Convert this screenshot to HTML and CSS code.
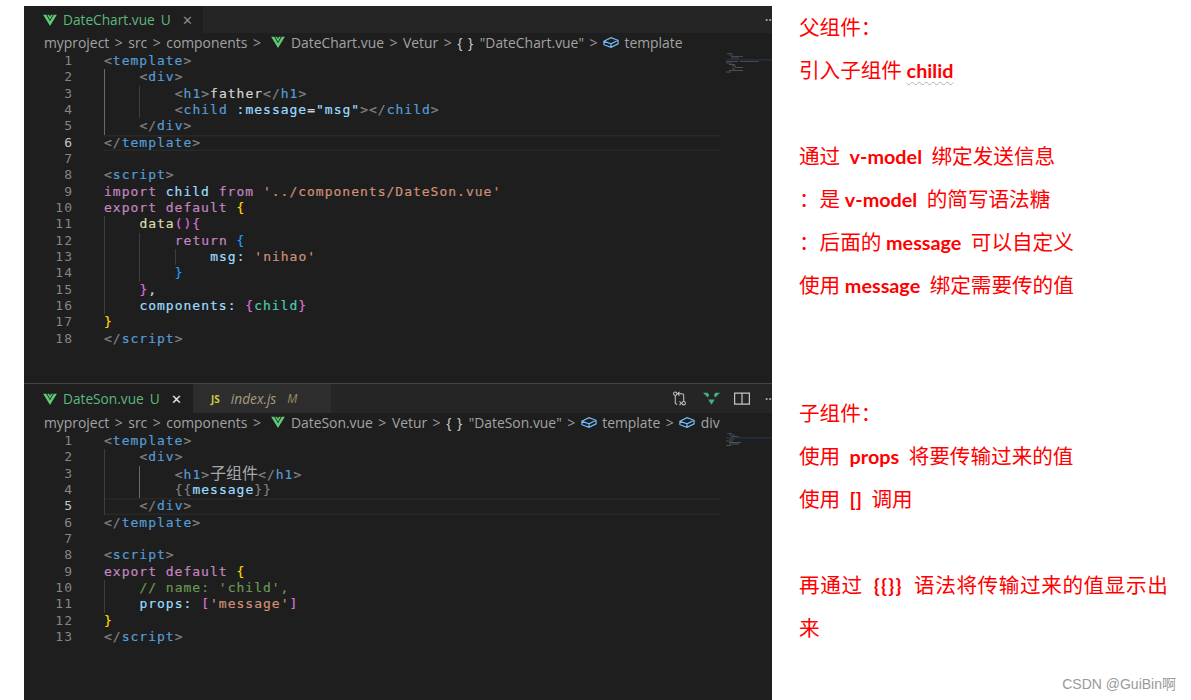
FILE: index.html
```html
<!DOCTYPE html>
<html lang="zh-CN">
<head>
<meta charset="utf-8">
<title>Vue props</title>
<link rel="stylesheet" href="styles.css">
</head>
<body>
<svg class="defs" width="0" height="0" aria-hidden="true">
  <symbol id="vue" viewBox="0 0 16 14"><path fill="#5fcb72" d="M0 1h3.600L8 8.600 12.400 1H16L8 14z"/><path fill="#5fcb72" d="M4.800 1h2l1.200 2.200L9.200 1h2L8 6.600z"/></symbol>
  <symbol id="cube" viewBox="0 0 18 14"><path fill="none" stroke="#75beff" stroke-width="1.300" d="M1 5.500 9 1.500l8 3v4l-8 4-8-3zM1 5.500l8 3 8-4M9 8.500v4"/></symbol>
</svg>
<main class="page">
  <section class="editor">
    <div class="pane pane-top">
      <div class="tabs">
        <div class="tab tab-active tab-one"><svg class="vue"><use href="#vue"/></svg><span class="tab-name">DateChart.vue</span><span class="tab-u">U</span><span class="tab-x dim">✕</span></div>
        <div class="tab-rest"><span class="dots">··</span></div>
      </div>
      <div class="crumbs">
        <span>myproject</span><i>&gt;</i><span>src</span><i>&gt;</i><span>components</span><i class="wide">&gt;</i><svg class="vue"><use href="#vue"/></svg><span>DateChart.vue</span><i>&gt;</i><span>Vetur</span><i>&gt;</i><b>{ }</b><span>"DateChart.vue"</span><i>&gt;</i><svg class="cube"><use href="#cube"/></svg><span>template</span>
      </div>
      <div class="body">
        <div class="lines">
          <div class="row"><span class="ln">1</span><code><u>&lt;</u><s>template</s><u>&gt;</u></code></div>
          <div class="row"><span class="ln">2</span><code><em class="ga"></em><u>&lt;</u><s>div</s><u>&gt;</u></code></div>
          <div class="row"><span class="ln">3</span><code><em class="ga"></em><em class="g"></em><u>&lt;</u><s>h1</s><u>&gt;</u><span class="tx">father</span><u>&lt;/</u><s>h1</s><u>&gt;</u></code></div>
          <div class="row"><span class="ln">4</span><code><em class="ga"></em><em class="g"></em><u>&lt;</u><s>child</s> <span class="at">:message</span><span class="tx">=</span><span class="at">"msg"</span><u>&gt;&lt;/</u><s>child</s><u>&gt;</u></code></div>
          <div class="row"><span class="ln">5</span><code><em class="ga"></em><u>&lt;/</u><s>div</s><u>&gt;</u></code></div>
          <div class="row row-cur"><span class="ln">6</span><code><u>&lt;/</u><s>template</s><u>&gt;</u></code></div>
          <div class="row"><span class="ln">7</span><code></code></div>
          <div class="row"><span class="ln">8</span><code><u>&lt;</u><s>script</s><u>&gt;</u></code></div>
          <div class="row"><span class="ln">9</span><code><span class="kw">import</span> <span class="at">child</span> <span class="kw">from</span> <span class="st">'../components/DateSon.vue'</span></code></div>
          <div class="row"><span class="ln">10</span><code><span class="kw">export default</span> <span class="yl">{</span></code></div>
          <div class="row"><span class="ln">11</span><code><em class="g"></em><span class="fn">data</span><span class="pk">(){</span></code></div>
          <div class="row"><span class="ln">12</span><code><em class="g"></em><em class="g"></em><span class="kw">return</span> <span class="bl">{</span></code></div>
          <div class="row"><span class="ln">13</span><code><em class="g"></em><em class="g"></em><em class="g"></em><span class="at">msg:</span> <span class="st">'nihao'</span></code></div>
          <div class="row"><span class="ln">14</span><code><em class="g"></em><em class="g"></em><span class="bl">}</span></code></div>
          <div class="row"><span class="ln">15</span><code><em class="g"></em><span class="pk">}</span><span class="tx">,</span></code></div>
          <div class="row"><span class="ln">16</span><code><em class="g"></em><span class="at">components:</span> <span class="pk">{</span><span class="te">child</span><span class="pk">}</span></code></div>
          <div class="row"><span class="ln">17</span><code><span class="yl">}</span></code></div>
          <div class="row"><span class="ln">18</span><code><u>&lt;/</u><s>script</s><u>&gt;</u></code></div>
        </div>
        <svg class="minimap" viewBox="0 0 46 22" aria-hidden="true">
          <rect x="0" y="6.500" width="46" height=".8" fill="#1f4263"/>
          <path stroke="#55677a" stroke-width=".6" d="M1 .500h5M3 2h4M5 3.500h12M5 5h8"/>
          <path stroke="#75607a" stroke-width=".6" d="M0 8.500h12M0 10h6"/>
          <path stroke="#7d5f50" stroke-width=".6" d="M14 8.500h19"/>
          <path stroke="#66757a" stroke-width=".6" d="M3 11.500h6M6 13h4M9 14.500h8M6 16h3M3 17.500h14M0 19h5"/>
        </svg>
      </div>
    </div>
    <div class="pane pane-bottom">
      <div class="tabs tabs-b">
        <div class="tab tab-active tab-two"><svg class="vue"><use href="#vue"/></svg><span class="tab-name">DateSon.vue</span><span class="tab-u">U</span><span class="tab-x">✕</span></div>
        <div class="tab tab-idle"><span class="js">JS</span><span class="idx">index.js</span><span class="mod">M</span></div>
        <div class="tab-rest actions">
          <svg class="act" viewBox="0 0 16 16" aria-hidden="true"><g fill="none" stroke="#c5c5c5" stroke-width="1.100"><circle cx="3.500" cy="2.800" r="1.800"/><circle cx="12.500" cy="13" r="1.800"/><path d="M3.500 4.600V13l2 1.500M6 3h4.500q2 0 2 2v6M8 1l-2 2 2 2M8 11l2 2-2 2"/></g></svg>
          <svg class="act" viewBox="0 0 18 14" aria-hidden="true"><path fill="#3fb27f" d="M0 1h5l1.500 2.500L5 6zM18 1h-5l-1.500 2.500L13 6zM5.500 8h7L9 13.500z"/></svg>
          <svg class="act act-split" viewBox="0 0 16 14" aria-hidden="true"><path fill="none" stroke="#c5c5c5" stroke-width="1.200" d="M.6 1.600h14.800v11H.6zM8 1.600v11"/></svg>
          <span class="dots">··</span>
        </div>
      </div>
      <div class="crumbs">
        <span>myproject</span><i>&gt;</i><span>src</span><i>&gt;</i><span>components</span><i class="wide">&gt;</i><svg class="vue"><use href="#vue"/></svg><span>DateSon.vue</span><i>&gt;</i><span>Vetur</span><i>&gt;</i><b>{ }</b><span>"DateSon.vue"</span><i>&gt;</i><svg class="cube"><use href="#cube"/></svg><span>template</span><i>&gt;</i><svg class="cube"><use href="#cube"/></svg><span>div</span>
      </div>
      <div class="body">
        <div class="lines">
          <div class="row"><span class="ln">1</span><code><u>&lt;</u><s>template</s><u>&gt;</u></code></div>
          <div class="row"><span class="ln">2</span><code><em class="g"></em><u>&lt;</u><s>div</s><u>&gt;</u></code></div>
          <div class="row"><span class="ln">3</span><code><em class="g"></em><em class="ga"></em><u>&lt;</u><s>h1</s><u>&gt;</u><span class="tx cjk">子组件</span><u>&lt;/</u><s>h1</s><u>&gt;</u></code></div>
          <div class="row"><span class="ln">4</span><code><em class="g"></em><em class="ga"></em><u>{{</u><span class="at">message</span><u>}}</u></code></div>
          <div class="row row-cur"><span class="ln">5</span><code><em class="g"></em><u>&lt;/</u><s>div</s><u>&gt;</u></code></div>
          <div class="row"><span class="ln">6</span><code><u>&lt;/</u><s>template</s><u>&gt;</u></code></div>
          <div class="row"><span class="ln">7</span><code></code></div>
          <div class="row"><span class="ln">8</span><code><u>&lt;</u><s>script</s><u>&gt;</u></code></div>
          <div class="row"><span class="ln">9</span><code><span class="kw">export default</span> <span class="yl">{</span></code></div>
          <div class="row"><span class="ln">10</span><code><em class="g"></em><span class="cm">// name: 'child',</span></code></div>
          <div class="row"><span class="ln">11</span><code><em class="g"></em><span class="at">props:</span> <span class="pk">[</span><span class="st">'message'</span><span class="pk">]</span></code></div>
          <div class="row"><span class="ln">12</span><code><span class="yl">}</span></code></div>
          <div class="row"><span class="ln">13</span><code><u>&lt;/</u><s>script</s><u>&gt;</u></code></div>
        </div>
        <svg class="minimap" viewBox="0 0 46 22" aria-hidden="true">
          <rect x="0" y="4.500" width="46" height=".8" fill="#1f4263"/>
          <path stroke="#55677a" stroke-width=".6" d="M1 .500h5M3 2h6M5 3.500h8M3 6h5"/>
          <path stroke="#75607a" stroke-width=".6" d="M0 8h7"/>
          <path stroke="#66757a" stroke-width=".6" d="M3 9.500h12M3 11h10M0 12.500h5"/>
        </svg>
      </div>
    </div>
  </section>
  <section class="notes">
    <p>父组件：</p>
    <p>引入子组件 <span class="lat squiggle">chilid</span></p>
    <p class="gap1">通过 <span class="lat">&nbsp;v-model&nbsp;</span> 绑定发送信息</p>
    <p>：是 <span class="lat">v-model&nbsp;</span> 的简写语法糖</p>
    <p>：后面的 <span class="lat">message&nbsp;</span> 可以自定义</p>
    <p>使用 <span class="lat">message&nbsp;</span> 绑定需要传的值</p>
    <p class="gap2">子组件：</p>
    <p>使用 <span class="lat">&nbsp;props&nbsp;</span> 将要传输过来的值</p>
    <p>使用 <span class="lat">&nbsp;[]&nbsp;</span> 调用</p>
    <p class="gap1 spread">再通过 <span class="lat curly">&nbsp;{{}}&nbsp;</span> 语法将传输过来的值显示出</p>
    <p>来</p>
  </section>
</main>
<div class="mark">CSDN @GuiBin啊</div>
</body>
</html>
```
FILE: styles.css
```css
* { box-sizing: border-box; }
html, body { margin: 0; height: 700px; overflow: hidden; background: #fff; }
.defs { position: absolute; }
.page { display: flex; height: 700px; padding: 6px 0 0 24px; }

.editor { width: 748px; flex: none; display: flex; flex-direction: column; background: #1e1e1e; overflow: hidden; }
.pane-top { height: 377px; flex: none; }
.pane-bottom { flex: 1; border-top: 1px solid #444; }

.tabs { display: flex; height: 27px; background: #252526; font: 13.700px "Open Sans", sans-serif; }
.tabs-b { height: 29px; }
.tab { display: flex; align-items: center; height: 100%; flex: none; }
.tab-active { background: #1e1e1e; padding-left: 19px; }
.tab-one { width: 179px; }
.tab-two { width: 169px; }
.tab-idle { width: 138px; background: #2d2d2d; padding-left: 18px; }
.tab-rest { flex: 1; display: flex; align-items: center; justify-content: flex-end; overflow: hidden; }
.vue { width: 14px; height: 12px; flex: none; }
.tab-name { color: #5cb87d; margin-left: 6px; }
.tab-u { color: #5cb87d; margin-left: 6px; }
.tab-x { color: #e8e8e8; font-size: 13px; margin-left: 11px; }
.tab-x.dim { color: #8a8a8a; }
.js { color: #cbcb41; font: bold 10px "Open Sans", sans-serif; }
.idx { color: #a89a80; font-style: italic; margin-left: 11px; }
.mod { color: #a08b63; font-style: italic; margin-left: 11px; font-size: 12px; }
.dots { color: #c5c5c5; font-size: 14px; letter-spacing: 0; }
.actions { gap: 14.500px; }
.act { height: 15px; width: 17px; flex: none; }
.act-split { width: 16px; }

.crumbs { display: flex; align-items: center; height: 20px; padding: 0 0 2px 20px; gap: 5.500px; color: #a3a3a3; font: 13.900px "Open Sans", sans-serif; white-space: nowrap; }
.crumbs i { font-style: normal; font-size: 14px; color: #9a9a9a; }
.crumbs i.wide { margin-right: 5px; }
.crumbs b { font-weight: 400; color: #d0d0d0; letter-spacing: 1px; }
.cube { width: 16px; height: 13px; flex: none; }

.body { display: flex; }
.lines { width: 696px; flex: none; }
.row { display: flex; height: 16.330px; line-height: 16.330px; align-items: stretch; }
.ln { width: 49px; flex: none; text-align: right; color: #858585; font: 13px/16.330px "DejaVu Sans Mono", monospace; letter-spacing: 1px; }
code { display: block; flex: 1; margin-left: 31px; white-space: pre; color: #d4d4d4; font: 13px/16.330px "DejaVu Sans Mono", "Noto Sans CJK SC", monospace; letter-spacing: 1px; -webkit-text-stroke: .2px; }
.row-cur .ln { color: #c6c6c6; }
.row-cur code { box-shadow: inset 0 1.500px 0 #282828, inset 0 -1.500px 0 #282828; }
code em { display: inline-block; width: 35.400px; height: 16.330px; vertical-align: top; border-left: 1px solid #3e3e3e; }
code em.ga { border-left-color: #6a6a6a; }
code u { text-decoration: none; color: #808080; }
code s { text-decoration: none; color: #569cd6; }
.at { color: #9cdcfe; }
.tx { color: #d4d4d4; }
.st { color: #ce9178; }
.kw { color: #c586c0; }
.fn { color: #dcdcaa; }
.cm { color: #6a9955; }
.yl { color: #ffd700; }
.pk { color: #da70d6; }
.bl { color: #179fff; }
.te { color: #4ec9b0; }
code .cjk { font-size: 16px; letter-spacing: 0; color: #a8a8a8; -webkit-text-stroke: 0; }
.minimap { width: 46px; height: 22px; margin-left: 6px; flex: none; }

.notes { flex: 1; margin-top: -1px; padding: 0 20px 0 27px; }
.notes p { margin: 0; font: 20.600px/43px "Noto Sans CJK SC", sans-serif; color: #f00; white-space: nowrap; }
.notes .gap1 { margin-top: 43px; }
.notes .gap2 { margin-top: 85px; }
.notes .spread { letter-spacing: .6px; }
.lat { font: bold 19.800px "Lato", sans-serif; }
.notes .curly { letter-spacing: 1.200px; }
.squiggle { text-decoration: underline wavy #b0b0b0 1px; text-underline-offset: 3px; }

.mark { position: absolute; right: 15px; bottom: 7px; color: #9a9a9a; font: 14px "Liberation Sans", "Noto Sans CJK SC", sans-serif; }
```
